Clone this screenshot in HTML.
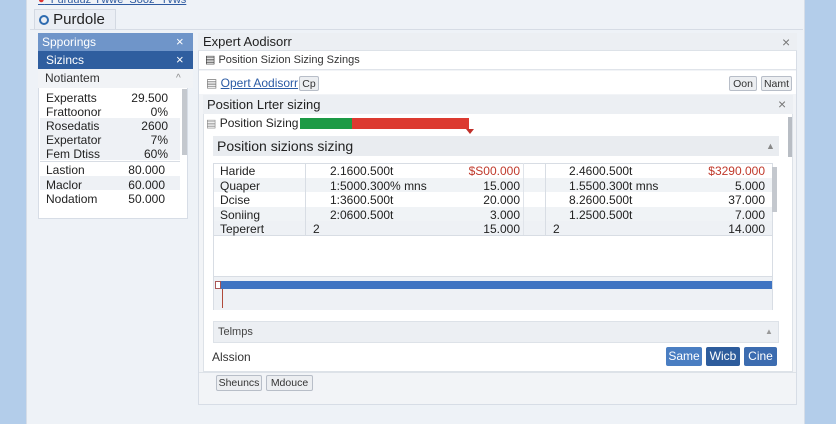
<!DOCTYPE html>
<html><head><meta charset="utf-8"><style>
*{box-sizing:border-box;margin:0;padding:0}
body{width:836px;height:424px;overflow:hidden;background:#b3cdea;font-family:"Liberation Sans",sans-serif;font-size:12px;color:#222;position:relative}
.a{position:absolute}
.win{left:26px;top:0;width:779px;height:424px;background:#eef2f7;border-left:1px solid #d5dde8;border-right:1px solid #d5dde8}
.r{text-align:right}
.btn{position:absolute;background:#eceef1;border:1px solid #b8bec8;border-radius:2px;font-size:10.5px;text-align:center;line-height:14px;color:#333}
.bb{position:absolute;background:#3c6cb0;color:#fff;border-radius:2px;font-size:12px;text-align:center;line-height:19px}
.x{position:absolute;color:#777;font-size:14px}
</style></head><body>
<div class="a win"></div>
<div class="a" style="left:38px;top:-6px;font-size:11px;color:#2e5aa0;text-decoration:underline"><span style="color:#d33">●</span> &nbsp;Furuuuz Ywwe &nbsp;Sooz &nbsp;Yvws</div>
<div class="a" style="left:34px;top:9px;width:82px;height:21px;background:#eaeef4;border:1px solid #d3d9e2;border-bottom:none;font-size:15px;line-height:20px;padding-left:4px"><span style="display:inline-block;width:10px;height:10px;border:2.5px solid #2d6bb0;border-radius:50%;vertical-align:-1px"></span> Purdole</div>
<div class="a" style="left:30px;top:29px;width:773px;height:1px;background:#d6dce5"></div>

<div class="a" style="left:38px;top:33px;width:150px;height:186px;background:#fff;border:1px solid #d7dde6"></div>
<div class="a" style="left:38px;top:33px;width:155px;height:18px;background:#6f95c9;color:#fff;font-size:12px;line-height:18px;padding-left:4px">Spporings<span style="position:absolute;left:138px;font-size:13px">×</span></div>
<div class="a" style="left:38px;top:51px;width:155px;height:18px;background:#2f5e9f;color:#fff;font-size:12px;line-height:18px;padding-left:8px">Sizincs<span style="position:absolute;left:138px;font-size:13px">×</span></div>
<div class="a" style="left:38px;top:69px;width:155px;height:19px;background:#f1f3f6;font-size:12px;line-height:19px;padding-left:7px;color:#333">Notiantem<span style="position:absolute;left:138px;color:#888;font-size:10px">^</span></div>
<div class="a" style="left:182px;top:89px;width:5px;height:66px;background:#c4c8ce"></div>
<div class="a" style="left:40px;top:118px;width:140px;height:42px;background:#eef1f5"></div>
<div class="a" style="left:40px;top:161px;width:140px;height:1px;background:#d8dde4"></div>
<div class="a" style="left:40px;top:176px;width:140px;height:14px;background:#eef1f5"></div>
<div class="a" style="left:46px;top:91px;line-height:14px;font-size:12px">Experatts<br>Frattoonor<br>Rosedatis<br>Expertator<br>Fem Dtiss</div>
<div class="a r" style="left:120px;top:91px;width:48px;line-height:14px;font-size:12px">29.500<br>0%<br>2600<br>7%<br>60%</div>
<div class="a" style="left:46px;top:163px;line-height:14.5px;font-size:12px">Lastion<br>Maclor<br>Nodatiom</div>
<div class="a r" style="left:120px;top:163px;width:45px;line-height:14.5px;font-size:12px">80.000<br>60.000<br>50.000</div>

<div class="a" style="left:198px;top:33px;width:599px;height:372px;background:#f2f4f7;border:1px solid #d7dde6"></div>
<div class="a" style="left:198px;top:33px;width:599px;height:18px;background:#eceff3;border-bottom:1px solid #dde2e8;font-size:13px;line-height:18px;padding-left:5px">Expert Aodisorr</div>
<div class="x" style="left:782px;top:34px">×</div>
<div class="a" style="left:199px;top:51px;width:597px;height:19px;background:#fff;border-bottom:1px solid #e0e4ea;font-size:11px;line-height:19px;padding-left:6px;color:#333">▤ Position Sizion Sizing Szings</div>
<div class="a" style="left:199px;top:71px;width:597px;height:23px;background:#fff"></div>
<div class="a" style="left:206px;top:76px;font-size:12px;color:#777">▤ <span style="color:#2b5ba5;text-decoration:underline">Opert Aodisorr</span></div>
<div class="btn" style="left:299px;top:76px;width:20px;height:15px">Cp</div>
<div class="btn" style="left:729px;top:76px;width:28px;height:15px">Oon</div>
<div class="btn" style="left:761px;top:76px;width:31px;height:15px">Namt</div>

<div class="a" style="left:203px;top:95px;width:590px;height:277px;background:#fff;border:1px solid #dde2e8"></div>
<div class="a" style="left:203px;top:95px;width:590px;height:19px;background:#eceff3;font-size:13px;line-height:19px;padding-left:4px">Position Lrter sizing</div>
<div class="x" style="left:778px;top:96px">×</div>
<div class="a" style="left:206px;top:115px;font-size:12px;line-height:16px"><span style="color:#888;font-size:11px">▤</span> Position Sizing</div>
<div class="a" style="left:300px;top:118px;width:52px;height:11px;background:#1d9a45"></div>
<div class="a" style="left:352px;top:118px;width:117px;height:11px;background:#dc3a30"></div>
<div class="a" style="left:466px;top:129px;width:0;height:0;border-left:4px solid transparent;border-right:4px solid transparent;border-top:5px solid #c0302a"></div>
<div class="a" style="left:788px;top:117px;width:4px;height:40px;background:#b8bdc4"></div>

<div class="a" style="left:213px;top:136px;width:566px;height:20px;background:#e9ecf0;font-size:14px;line-height:20px;padding-left:4px">Position sizions sizing<span style="position:absolute;left:553px;color:#888;font-size:9px">▲</span></div>
<div class="a" style="left:213px;top:163px;width:560px;height:147px;background:#fff;border:1px solid #d8dde4"></div>
<div class="a" style="left:214px;top:178px;width:558px;height:14px;background:#f0f3f6"></div>
<div class="a" style="left:214px;top:207px;width:558px;height:14px;background:#f0f3f6"></div>
<div class="a" style="left:214px;top:221px;width:558px;height:14px;background:#eef1f5"></div>
<div class="a" style="left:214px;top:235px;width:558px;height:1px;background:#d8dde4"></div>
<div class="a" style="left:305px;top:163px;width:1px;height:72px;background:#d8dde4"></div>
<div class="a" style="left:523px;top:163px;width:1px;height:72px;background:#e0e4ea"></div>
<div class="a" style="left:545px;top:163px;width:1px;height:72px;background:#d8dde4"></div>
<div class="a" style="left:772px;top:167px;width:5px;height:45px;background:#c4c8ce"></div>
<div class="a" style="left:220px;top:164px;line-height:14.5px;font-size:12px">Haride<br>Quaper<br>Dcise<br>Soniing<br>Teperert</div>
<div class="a" style="left:330px;top:164px;line-height:14.5px;font-size:12px">2.1600.500t<br>1:5000.300% mns<br>1:3600.500t<br>2:0600.500t</div>
<div class="a" style="left:313px;top:222px;font-size:12px">2</div>
<div class="a r" style="left:440px;top:164px;width:80px;line-height:14.5px;font-size:12px"><span style="color:#c0392b">$S00.000</span><br>15.000<br>20.000<br>3.000<br>15.000</div>
<div class="a" style="left:569px;top:164px;line-height:14.5px;font-size:12px">2.4600.500t<br>1.5500.300t mns<br>8.2600.500t<br>1.2500.500t</div>
<div class="a" style="left:553px;top:222px;font-size:12px">2</div>
<div class="a r" style="left:680px;top:164px;width:85px;line-height:14.5px;font-size:12px"><span style="color:#c0392b">$3290.000</span><br>5.000<br>37.000<br>7.000<br>14.000</div>
<div class="a" style="left:214px;top:276px;width:558px;height:1px;background:#d8dde4"></div>
<div class="a" style="left:214px;top:277px;width:558px;height:33px;background:#eef1f5"></div>
<div class="a" style="left:220px;top:281px;width:552px;height:8px;background:#3f74c2"></div>
<div class="a" style="left:215px;top:281px;width:6px;height:8px;background:#fff;border:1px solid #a55"></div>
<div class="a" style="left:222px;top:289px;width:1px;height:19px;background:#b04a3a"></div>

<div class="a" style="left:213px;top:321px;width:566px;height:22px;background:#eceff3;border:1px solid #dde2e8;font-size:11px;line-height:20px;padding-left:4px;color:#444">Telmps<span style="position:absolute;left:551px;color:#999;font-size:8px">▲</span></div>
<div class="a" style="left:212px;top:350px;font-size:12px;color:#333">Alssion</div>
<div class="bb" style="left:666px;top:347px;width:36px;height:19px;background:#4a7ec2">Same</div>
<div class="bb" style="left:706px;top:347px;width:34px;height:19px;background:#2d5c9c">Wicb</div>
<div class="bb" style="left:744px;top:347px;width:33px;height:19px">Cine</div>
<div class="a" style="left:199px;top:372px;width:597px;height:1px;background:#dde2e8"></div>
<div class="btn" style="left:216px;top:375px;width:46px;height:16px">Sheuncs</div>
<div class="btn" style="left:266px;top:375px;width:47px;height:16px">Mdouce</div>
</body></html>
